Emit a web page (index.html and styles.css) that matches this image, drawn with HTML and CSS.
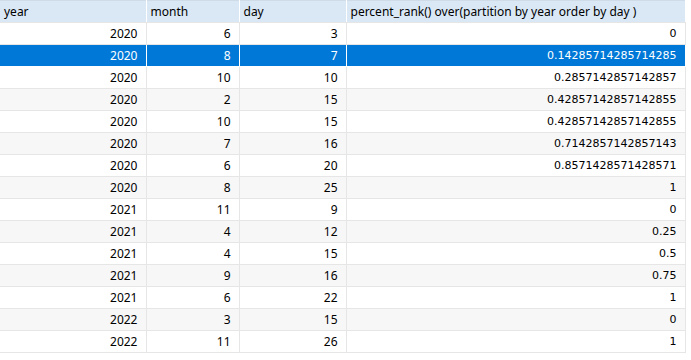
FILE: index.html
```html
<!DOCTYPE html>
<html lang="en">
<head>
    <meta charset="UTF-8">
    <title>percent_rank result</title>
    <link rel="stylesheet" href="styles.css">
</head>
<body>
    <table class="grid">
        <colgroup>
            <col class="c-year">
            <col class="c-month">
            <col class="c-day">
            <col class="c-rank">
        </colgroup>
        <thead>
            <tr>
                <th>year</th>
                <th>month</th>
                <th>day</th>
                <th>percent_rank() over(partition by year order by day )</th>
            </tr>
        </thead>
        <tbody>
            <tr><td>2020</td><td>6</td><td>3</td><td class="num">0</td></tr>
            <tr class="selected"><td>2020</td><td>8</td><td>7</td><td class="num">0.14285714285714285</td></tr>
            <tr><td>2020</td><td>10</td><td>10</td><td class="num">0.2857142857142857</td></tr>
            <tr><td>2020</td><td>2</td><td>15</td><td class="num">0.42857142857142855</td></tr>
            <tr><td>2020</td><td>10</td><td>15</td><td class="num">0.42857142857142855</td></tr>
            <tr><td>2020</td><td>7</td><td>16</td><td class="num">0.7142857142857143</td></tr>
            <tr><td>2020</td><td>6</td><td>20</td><td class="num">0.8571428571428571</td></tr>
            <tr><td>2020</td><td>8</td><td>25</td><td class="num">1</td></tr>
            <tr><td>2021</td><td>11</td><td>9</td><td class="num">0</td></tr>
            <tr><td>2021</td><td>4</td><td>12</td><td class="num">0.25</td></tr>
            <tr><td>2021</td><td>4</td><td>15</td><td class="num">0.5</td></tr>
            <tr><td>2021</td><td>9</td><td>16</td><td class="num">0.75</td></tr>
            <tr><td>2021</td><td>6</td><td>22</td><td class="num">1</td></tr>
            <tr><td>2022</td><td>3</td><td>15</td><td class="num">0</td></tr>
            <tr><td>2022</td><td>11</td><td>26</td><td class="num">1</td></tr>
        </tbody>
    </table>
</body>
</html>
```

FILE: styles.css
```css
body { margin: 0; background: #ffffff; font-family: "Noto Sans", "Noto Sans CJK SC", sans-serif; font-size: 12px; color: #000; }
.grid { border-collapse: collapse; table-layout: fixed; width: 685px; }
.c-year { width: 146px; }
.c-month { width: 93px; }
.c-day { width: 107px; }
.c-rank { width: 339px; }
.grid th, .grid td { height: 21px; padding: 0 8px 0 6px; border: 1px solid #e6e6e6; white-space: nowrap; overflow: hidden; line-height: 20px; }
.grid th { background: #dae8f6; font-weight: normal; text-align: left; padding-left: 4px; border-color: #cfdbe7 #ffffff #ffffff #ffffff; border-bottom-color: #e6e6e6; }
.grid td { text-align: right; }
.grid tr:first-child th:first-child, .grid td:first-child { border-left: none; }
.grid tbody tr:nth-child(even) { background: #f7f7f7; }
.grid tbody tr.selected { background: #0078d7; color: #ffffff; }
.grid tbody tr.selected td { border-color: #ffffff; border-top-color: #e6e6e6; }
.num { font-family: "DejaVu Sans", sans-serif; font-size: 11px; }
```
